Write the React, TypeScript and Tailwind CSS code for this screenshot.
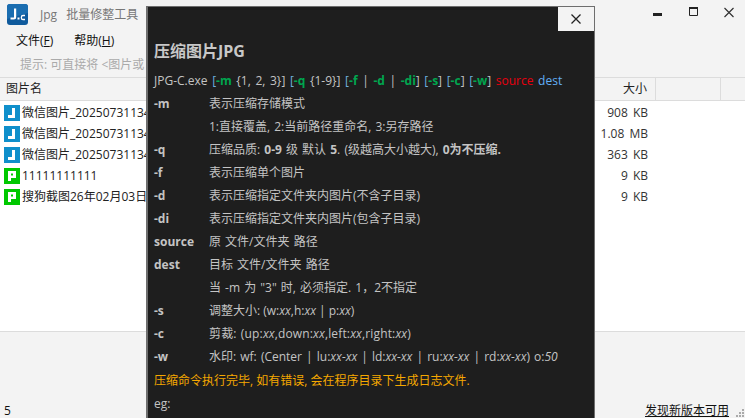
import { ReactNode } from 'react';

// file rows of the list behind the dialog
const files = [
  { name: '微信图片_20250731134', size: '908 KB', type: 'j' },
  { name: '微信图片_20250731134', size: '1.08 MB', type: 'j' },
  { name: '微信图片_20250731134', size: '363 KB', type: 'j' },
  { name: '11111111111', size: '9 KB', type: 'p' },
  { name: '搜狗截图26年02月03日', size: '9 KB', type: 'p' },
];

function FileIcon({ type }: { type: string }) {
  if (type === 'j') {
    return (
      <svg width="16" height="16" viewBox="0 0 16 16" className="shrink-0">
        <rect width="16" height="16" fill="#0f8fcb" />
        <path d="M8 3h3v10H4v-3h4z" fill="#fff" />
      </svg>
    );
  }
  return (
    <svg width="16" height="16" viewBox="0 0 16 16" className="shrink-0">
      <rect width="16" height="16" fill="#00c800" />
      <path fillRule="evenodd" d="M4 3h8v7H7v3H4zM7 5.500v2h2v-2z" fill="#fff" />
    </svg>
  );
}

function Logo() {
  return (
    <svg width="21" height="21" viewBox="0 0 21 21" className="shrink-0">
      <rect width="21" height="21" rx="3" fill="#0f5a9c" />
      <path d="M0 3a3 3 0 0 1 3-3h15a3 3 0 0 1 3 3v6L0 15z" fill="#1a6db0" />
      <path d="M7 4.500h2.200v8.500a2.500 2.500 0 0 1-2.500 2.500H3.500v-2h3q.5 0 .5-.5z" fill="#fff" />
      <rect x="10.500" y="13.500" width="2" height="2" fill="#fff" />
      <path d="M18 11.500h-2a1.600 1.600 0 0 0-1.600 1.600v.8a1.600 1.600 0 0 0 1.600 1.600h2" fill="none" stroke="#fff" strokeWidth="1.300" />
    </svg>
  );
}

// one row of the option help: left option name, right description
function HelpRow({ name, children }: { name?: string; children: ReactNode }) {
  return (
    <div className="flex h-[23px] items-center [word-spacing:1px]">
      <span className="w-[55px] shrink-0 font-bold">{name}</span>
      <span className="whitespace-nowrap">{children}</span>
    </div>
  );
}

const X = ({ children }: { children: ReactNode }) => <i>{children}</i>;
const G = ({ children }: { children: ReactNode }) => <b className="text-[#00a64f]">{children}</b>;
const B = ({ children }: { children: ReactNode }) => <span className="text-[#6fb0dc]">{children}</span>;

function HelpDialog() {
  return (
    <div className="absolute left-[146px] top-[6px] h-[412px] w-[449px] border-l-2 border-r border-t border-[#6e6e6e] bg-[#1e1e1e] text-[#c4c4c4]">
      <button className="absolute right-0 top-0 flex h-[24px] w-[36px] items-center justify-center bg-[#f3f3f3]">
        <svg width="10" height="10" viewBox="0 0 10 10">
          <path d="M0.500 0.500l9 9M9.500 0.500l-9 9" stroke="#222" strokeWidth="1.300" fill="none" />
        </svg>
      </button>
      <div className="pl-[6px] pt-[33px]">
        <h1 className="h-[22px] text-[16px] font-bold leading-[22px] text-[#c8c8c8]">压缩图片JPG</h1>
        <div className="mt-[7px] flex h-[23px] items-center whitespace-nowrap [word-spacing:1.5px]">
          <span>
            JPG-C.exe <B>[</B><G>-m</G> {'{1, 2, 3}'}] <B>[</B><G>-q</G> {'{1-9}'}] <B>[</B><G>-f</G> | <G>-d</G> | <G>-di</G>] <B>[</B><G>-s</G>] <B>[</B><G>-c</G>] <B>[</B><G>-w</G>] <span className="text-[#e8000f]">source</span> <span className="text-[#62aef5]">dest</span>
          </span>
        </div>
        <HelpRow name="-m">表示压缩存储模式</HelpRow>
        <HelpRow>1:直接覆盖, 2:当前路径重命名, 3:另存路径</HelpRow>
        <HelpRow name="-q">
          压缩品质: <b>0-9</b> 级 默认 <b>5</b>. (级越高大小越大), <b>0为不压缩.</b>
        </HelpRow>
        <HelpRow name="-f">表示压缩单个图片</HelpRow>
        <HelpRow name="-d">表示压缩指定文件夹内图片(不含子目录)</HelpRow>
        <HelpRow name="-di">表示压缩指定文件夹内图片(包含子目录)</HelpRow>
        <HelpRow name="source">原 文件/文件夹 路径</HelpRow>
        <HelpRow name="dest">目标 文件/文件夹 路径</HelpRow>
        <HelpRow>当 -m 为 "3" 时, 必须指定. 1，2不指定</HelpRow>
        <HelpRow name="-s">
          <span className="[word-spacing:0]">调整大小: (w:<X>xx</X>,h:<X>xx</X> | p:<X>xx</X>)</span>
        </HelpRow>
        <HelpRow name="-c">
          <span className="tracking-[0.15px]">剪裁: (up:<X>xx</X>,down:<X>xx</X>,left:<X>xx</X>,right:<X>xx</X>)</span>
        </HelpRow>
        <HelpRow name="-w">
          水印: wf: (Center | lu:<X>xx-xx</X> | ld:<X>xx-xx</X> | ru:<X>xx-xx</X> | rd:<X>xx-xx</X>) o:<X>50</X>
        </HelpRow>
        <div className="mt-px flex h-[23px] items-center text-[#f5a800]">压缩命令执行完毕, 如有错误, 会在程序目录下生成日志文件.</div>
        <div className="flex h-[23px] items-center">eg:</div>
      </div>
    </div>
  );
}

export default function App() {
  return (
    <div className="relative flex h-[418px] w-[745px] flex-col overflow-hidden bg-[#f3f3f3] text-[12px] text-[#222] [font-family:'Open_Sans','Noto_Sans_CJK_SC',sans-serif]">
      {/* Title bar */}
      <div className="flex h-[29px] shrink-0 items-center">
        <div className="ml-[7px] flex"><Logo /></div>
        <span className="ml-[12px] text-[#777] [word-spacing:6px]">Jpg 批量修整工具</span>
        <div className="ml-auto flex items-center">
          <svg width="82" height="14" viewBox="0 0 82 14" className="mr-[10px] mt-[-7px]">
            <rect x="0" y="9" width="9" height="3" fill="#222" />
            <path d="M36.500 3.500h8v8h-8z" fill="none" stroke="#222" />
            <rect x="36" y="3" width="9" height="2" fill="#222" />
            <path d="M71.500 4l9 9M80.500 4l-9 9" stroke="#333" strokeWidth="1.200" fill="none" />
          </svg>
        </div>
      </div>
      {/* Menu bar */}
      <div className="flex h-[24px] shrink-0 items-center gap-[21px] pl-[16px] text-[#111]">
        <span>文件(<u>F</u>)</span>
        <span>帮助(<u>H</u>)</span>
      </div>
      {/* Hint */}
      <div className="flex h-[24px] shrink-0 items-center pl-[20px] text-[#aaa]">提示: 可直接将 &lt;图片或</div>
      {/* List header */}
      <div className="flex h-[24px] shrink-0 border-y border-[#dcdcdc]">
        <span className="flex flex-1 items-center pl-[6px]">图片名</span>
        <span className="flex w-[65px] items-center justify-end border-r border-[#dcdcdc] pr-[8px]">大小</span>
        <span className="w-[65px] border-r border-[#dcdcdc]" />
        <span className="w-[24px]" />
      </div>
      {/* File list */}
      <div className="flex h-[230px] shrink-0 flex-col bg-white pt-px">
        {files.map((f, i) => (
          <div key={i} className="flex h-[21px] items-center pl-[4px]">
            <FileIcon type={f.type} />
            <span className="ml-[2px] flex-1 whitespace-nowrap">{f.name}</span>
            <span className="mr-[97px] text-[#333] [word-spacing:2px]">{f.size}</span>
          </div>
        ))}
      </div>
      {/* Status bar */}
      <div className="relative flex flex-1 items-end justify-between border-t border-[#dcdcdc] pl-[4px] pr-[16px] leading-[14px] text-[#111]">
        <span>5</span>
        <span className="underline">发现新版本可用</span>
        <svg width="10" height="10" viewBox="0 0 10 10" className="absolute bottom-0 right-0">
          <g fill="#aaa">
            <rect x="7" y="1" width="2" height="2" />
            <rect x="4" y="4" width="2" height="2" />
            <rect x="7" y="4" width="2" height="2" />
            <rect x="1" y="7" width="2" height="2" />
            <rect x="4" y="7" width="2" height="2" />
            <rect x="7" y="7" width="2" height="2" />
          </g>
        </svg>
      </div>
      <HelpDialog />
    </div>
  );
}
